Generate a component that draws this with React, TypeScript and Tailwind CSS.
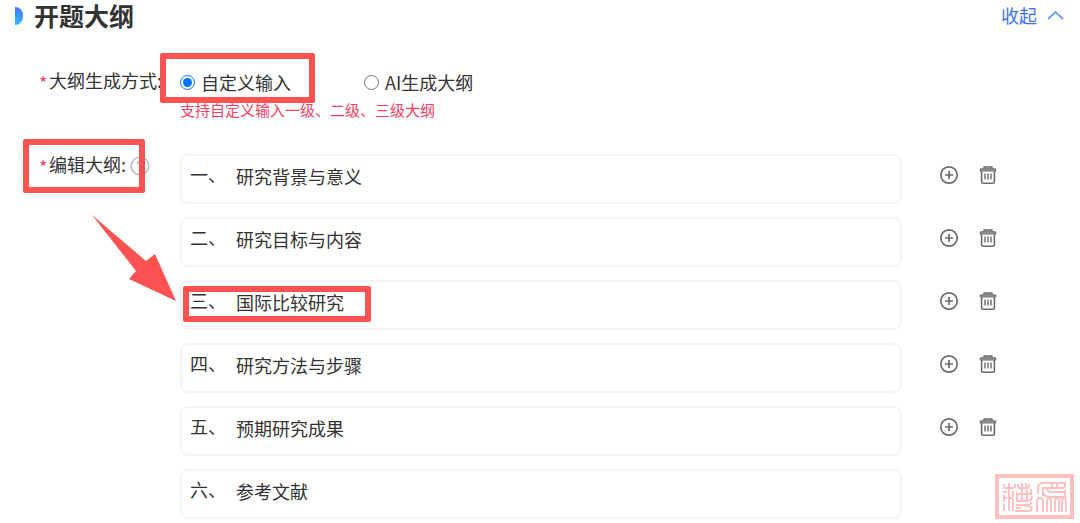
import { useState } from 'react';

const NUMERALS = ['一', '二', '三', '四', '五', '六', '七', '八', '九', '十'];

const initialSections = [
  { id: 1, title: '研究背景与意义', locked: false },
  { id: 2, title: '研究目标与内容', locked: false },
  { id: 3, title: '国际比较研究', locked: false },
  { id: 4, title: '研究方法与步骤', locked: false },
  { id: 5, title: '预期研究成果', locked: false },
  { id: 6, title: '参考文献', locked: true },
];

function AddIcon() {
  return (
    <svg width="20" height="20" viewBox="0 0 20 20" fill="none" stroke="#6b6b6b" strokeWidth="1.7">
      <circle cx="10" cy="10" r="8.2" />
      <path d="M10 6v8M6 10h8" />
    </svg>
  );
}

function TrashIcon() {
  return (
    <svg width="18" height="20" viewBox="0 0 18 20" fill="none" stroke="#6b6b6b">
      <path d="M5 3.6V1.8h8v1.8" fill="#aaaaaa" strokeWidth="1.3" />
      <rect x="1.2" y="3.8" width="15.6" height="2.2" rx="1" fill="#aaaaaa" strokeWidth="1.2" />
      <path d="M2.6 6v10.600a1.700 1.700 0 0 0 1.700 1.700h9.400a1.700 1.700 0 0 0 1.700-1.700V6" strokeWidth="1.6" />
      <path d="M6 8.500v6M9 8.500v6M12 8.500v6" strokeWidth="1.4" />
    </svg>
  );
}

function HelpIcon() {
  return (
    <svg width="20" height="20" viewBox="0 0 20 20" fill="none" stroke="#bbbbbb" strokeWidth="1.6">
      <circle cx="10" cy="10" r="8.8" />
      <path d="M7.5 8a2.5 2.5 0 1 1 3.4 2.3c-.6.3-.9.7-.9 1.4M10 13.4v1.4" />
    </svg>
  );
}

function Seal() {
  return (
    <svg width="79" height="45" viewBox="0 0 79 45" fill="none" stroke="#ffbfbf" strokeWidth="1.9">
      <rect x="2" y="2" width="75" height="41" strokeWidth="4" />
      <path d="M9 10v2q0 2 2 2h7q2 0 2-2v-2M14 9v28M8 18h4M9 21v7M9 30v7M8 24h4M18 17v6M18 25v12M14 24h4" />
      <path d="M23 10v2q0 2 2 2h7q2 0 2-2v-2M27 9v18M31 9v5M22 18v9M21 20h16M32 16v11M36 15v5M37 22q0 5-5 5H21" />
      <path d="M21 31h10q5 0 6-3M21 31q14 0 16 3q0 3-4 3H20M21 34h5" />
      <path d="M43 20v-6q0-5 5-5h22v2q0 3-3 3H48v8M52 14q0 4 4 4h14v-2M48 19q2 4 7 4h15v-5M57 9v5M62 9v5" />
      <path d="M42 38V28q0-4 3-4t3 4v10M52 38V28q0-4 2-4t2 4v10M60 38V28q0-4 2-4t2 4v10M67 38V28q0-4 2-4t2 4v10" />
    </svg>
  );
}

function Required() {
  return <span className="w-2 shrink-0 leading-8 text-[#fa3e5f]">*</span>;
}

export default function App() {
  const [mode, setMode] = useState('custom');
  const [collapsed, setCollapsed] = useState(false);
  const [sections, setSections] = useState(initialSections);

  const updateTitle = (id: number, title: string) => {
    setSections(sections.map((s) => (s.id === id ? { ...s, title } : s)));
  };

  const addAfter = (index: number) => {
    const next = [...sections];
    next.splice(index + 1, 0, { id: Date.now(), title: '', locked: false });
    setSections(next);
  };

  const removeSection = (id: number) => {
    setSections(sections.filter((s) => s.id !== id));
  };

  return (
    <div className="relative bg-white pb-1 font-['Noto_Sans_CJK_SC',sans-serif] text-lg leading-7 text-[#333333]">
      {/* Header */}
      <header className="flex h-8 items-center justify-between pr-4 pl-[15px]">
        <div className="flex items-center gap-[11px]">
          <span className="h-[18px] w-2 rounded-r-full bg-linear-to-b from-[#3f78fb] to-[#35b6ff]" />
          <h2 className="pb-0.5 text-[25px] leading-7 font-bold">开题大纲</h2>
        </div>
        <button
          type="button"
          onClick={() => setCollapsed(!collapsed)}
          className="flex items-center gap-2.5 pb-0.5 text-[#3d73f5]"
        >
          收起
          <svg width="17" height="10" viewBox="0 0 17 10" fill="none" stroke="#6b9bff" strokeWidth="1.8">
            <path d="M1 9l7.500-7L16 9" />
          </svg>
        </button>
      </header>

      {!collapsed && (
        <>
          {/* Generation mode */}
          <div role="radiogroup" aria-labelledby="mode-label" className="flex pt-9">
            <div className="-mt-0.5 flex w-[180px] shrink-0 gap-0.5 pl-[39px] whitespace-nowrap">
              <Required />
              <span id="mode-label">大纲生成方式:</span>
            </div>
            <div>
              <div className="flex items-center gap-[73px]">
                <label className="relative flex items-center gap-1.5">
                  <input
                    type="radio"
                    name="mode"
                    checked={mode === 'custom'}
                    onChange={() => setMode('custom')}
                    className="size-[15px] accent-[#0075ff]"
                  />
                  自定义输入
                  <span className="pointer-events-none absolute -top-[15px] -left-5 h-[50px] w-[155px] rounded-xs border-6 border-[#fc5252]" />
                </label>
                <label className="flex items-center gap-1.5">
                  <input
                    type="radio"
                    name="mode"
                    checked={mode === 'ai'}
                    onChange={() => setMode('ai')}
                    className="size-[15px] accent-[#0075ff]"
                  />
                  AI生成大纲
                </label>
              </div>
              <p className="text-[15px] leading-7 text-[#fa3e5f]">支持自定义输入一级、二级、三级大纲</p>
            </div>
          </div>

          {/* Outline editor */}
          <div className="flex pt-[30px]">
            <div className="relative w-[180px] shrink-0">
              <div className="-mt-1 flex gap-0.5 pl-[39px]">
                <Required />
                <span>编辑大纲:</span>
                <button type="button" aria-label="帮助" className="ml-0.5 self-center">
                  <HelpIcon />
                </button>
              </div>
              <span className="pointer-events-none absolute -top-[15px] left-[23px] h-[54px] w-[122px] rounded-xs border-6 border-[#fc5252]" />
              <svg
                className="pointer-events-none absolute top-[61px] left-[92px]"
                width="84"
                height="86"
                viewBox="0 0 84 86"
                fill="#fc5252"
              >
                <path d="M0 0L54 46L63 39L84 86L37 64L44 56Z" />
              </svg>
            </div>

            <ol className="flex flex-1 flex-col gap-[13px]">
              {sections.map((section, index) => (
                <li key={section.id} className="flex">
                  <div className="relative flex h-[50px] flex-1 rounded-lg border-2 border-[#f5f5f5] pt-1 pl-2">
                    <label htmlFor={`section-${section.id}`} className="w-[46px] shrink-0">
                      {NUMERALS[index]}、
                    </label>
                    <input
                      id={`section-${section.id}`}
                      value={section.title}
                      onChange={(e) => updateTitle(section.id, e.target.value)}
                      className="mt-0.5 h-7 min-w-0 flex-1 outline-none"
                    />
                    {section.id === 3 && (
                      <span className="pointer-events-none absolute top-1 left-px h-9 w-[188px] rounded-xs border-6 border-[#fc5252]" />
                    )}
                  </div>
                  <div className="flex w-[178px] shrink-0 items-start gap-5 pt-[11px] pl-[37px]">
                    {!section.locked && (
                      <>
                        <button type="button" aria-label="添加" onClick={() => addAfter(index)}>
                          <AddIcon />
                        </button>
                        <button type="button" aria-label="删除" onClick={() => removeSection(section.id)}>
                          <TrashIcon />
                        </button>
                      </>
                    )}
                  </div>
                </li>
              ))}
            </ol>
          </div>
        </>
      )}

      <div className="pointer-events-none absolute right-1.5 bottom-1">
        <Seal />
      </div>
    </div>
  );
}
